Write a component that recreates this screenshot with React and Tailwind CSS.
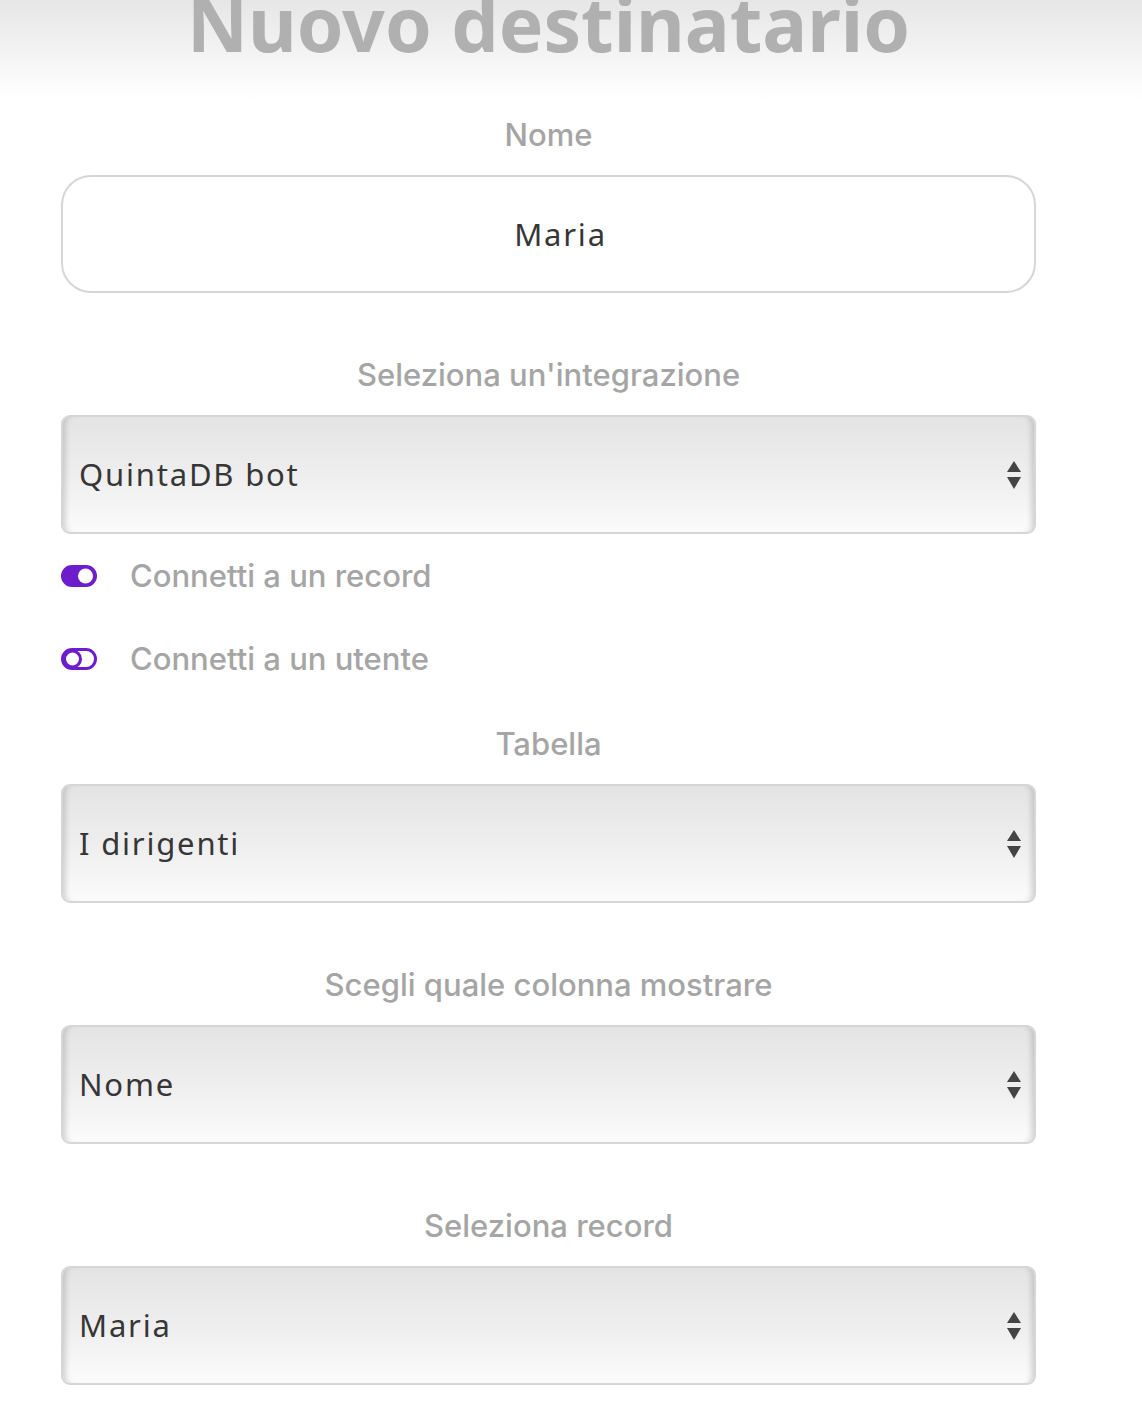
import React, { useState } from 'react';

const Label = ({ children }) => (
  <div className="h-10 text-center text-[31px] leading-10 font-medium text-[#a5a5a5] font-['Inter','Liberation_Sans',sans-serif]">
    {children}
  </div>
);

const FakeSelect = ({ value }) => (
  <div className="relative h-[119px] rounded-[9px] border-2 border-[#d6d6d6] bg-gradient-to-b from-[#e4e4e4] via-[#eeeeee] to-[#fbfbfb] shadow-[inset_7px_0_6px_-5px_rgba(0,0,0,0.18),inset_-7px_0_6px_-5px_rgba(0,0,0,0.18)] flex items-center pl-4 pr-10">
    <span className="text-[31px] text-[#363636] font-['Noto_Sans',sans-serif] tracking-[1.8px]">{value}</span>
    <svg className="absolute right-[12px] top-1/2 -translate-y-1/2" width="16" height="30" viewBox="0 0 16 30">
      <path d="M8 1 L15 12 L1 12 Z" fill="#444" />
      <path d="M1 17 L15 17 L8 29 Z" fill="#444" />
    </svg>
  </div>
);

const ToggleOn = () => (
  <svg width="36" height="24" viewBox="0 0 36 24">
    <rect x="0" y="1" width="36" height="22" rx="11" fill="#6d1dcb" />
    <circle cx="24.5" cy="12" r="7.5" fill="#fff" />
  </svg>
);

const ToggleOff = () => (
  <svg width="36" height="24" viewBox="0 0 36 24">
    <rect x="1.5" y="2.5" width="33" height="19" rx="9.5" fill="none" stroke="#6d1dcb" strokeWidth="3" />
    <circle cx="11.5" cy="12" r="8" fill="#fff" stroke="#6d1dcb" strokeWidth="3" />
  </svg>
);

const ToggleRow = ({ on, label }) => (
  <div className="flex items-center h-10">
    {on ? <ToggleOn /> : <ToggleOff />}
    <span className="ml-[33px] text-[31px] font-medium text-[#a5a5a5] font-['Inter','Liberation_Sans',sans-serif]">{label}</span>
  </div>
);

export default function App() {
  const [name, setName] = useState('Maria');
  const [recordOn] = useState(true);

  return (
    <div className="w-[1142px] min-h-[1420px] bg-white overflow-hidden">
      <div className="h-[100px] bg-gradient-to-b from-[#e6e6e6] to-white overflow-hidden">
        <div className="ml-[61px] w-[975px]">
          <h1 className="-mt-[17px] text-center text-[75px] leading-[80px] font-bold text-[#b0b0b0] font-['Noto_Sans',sans-serif]">
            Nuovo destinatario
          </h1>
        </div>
      </div>

      <div className="ml-[61px] w-[975px] pt-[15px]">
        <Label>Nome</Label>
        <div className="mt-5 h-[118px] rounded-[30px] border-2 border-[#d6d6d6] flex items-center justify-center pl-6">
          <input
            value={name}
            onChange={(e) => setName(e.target.value)}
            className="w-full text-center bg-transparent outline-none text-[31px] tracking-[1.8px] text-[#363636] font-['Noto_Sans',sans-serif]"
          />
        </div>

        <div className="mt-[62px]">
          <Label>Seleziona un'integrazione</Label>
        </div>
        <div className="mt-5">
          <FakeSelect value="QuintaDB bot" />
        </div>

        <div className="mt-[22px]">
          <ToggleRow on={recordOn} label="Connetti a un record" />
        </div>
        <div className="mt-[43px]">
          <ToggleRow on={false} label="Connetti a un utente" />
        </div>

        <div className="mt-[45px]">
          <Label>Tabella</Label>
        </div>
        <div className="mt-5">
          <FakeSelect value="I dirigenti" />
        </div>

        <div className="mt-[62px]">
          <Label>Scegli quale colonna mostrare</Label>
        </div>
        <div className="mt-5">
          <FakeSelect value="Nome" />
        </div>

        <div className="mt-[62px]">
          <Label>Seleziona record</Label>
        </div>
        <div className="mt-5">
          <FakeSelect value="Maria" />
        </div>
      </div>
    </div>
  );
}
